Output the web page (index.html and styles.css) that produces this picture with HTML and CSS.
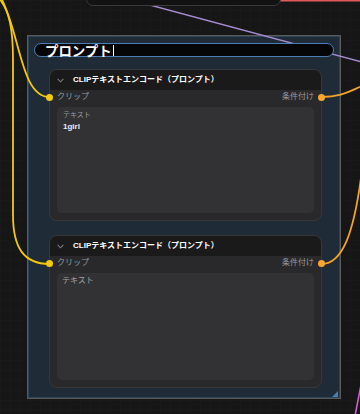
FILE: index.html
```html
<!DOCTYPE html>
<html lang="ja">
<head>
<meta charset="utf-8">
<title>プロンプト</title>
<link rel="stylesheet" href="styles.css">
</head>
<body>
<div class="canvas">
  <div class="topnode"></div>
  <svg class="wires" width="360" height="414" viewBox="0 0 360 414">
    <path class="wire wire-red" d="M280 0.6 L362 0.6"/>
    <path class="wire wire-purple" d="M120 -3 C200 18, 280 40, 362 62"/>
    <path class="wire wire-clip" d="M0 -4 C20 30, 20 97, 49.5 97"/>
    <path class="wire wire-clip" d="M-3 -4 C10 10, 13 30, 13 60 L13 215 C13 248, 24 264, 49.5 264"/>
    <path class="wire wire-cond" d="M321.5 97 C340 97, 348 92, 362 86"/>
    <path class="wire wire-cond" d="M321.5 264 C342 264, 354 235, 362 170"/>
    <path class="wire wire-pink" d="M362 380 C359 395, 357 405, 355 416"/>
  </svg>
  <section class="group">
    <div class="group-title"><span class="group-title-text">プロンプト</span><span class="caret"></span></div>

    <div class="node node-first">
      <header class="node-title">
        <svg class="chevron" width="7" height="5" viewBox="0 0 7 5"><path d="M0.6 0.8 L3.5 3.8 L6.4 0.8"/></svg>
        <span class="node-name">CLIPテキストエンコード（プロンプト）</span>
      </header>
      <div class="node-io">
        <span class="slot"><i class="dot dot-in dot-clip"></i>クリップ</span>
        <span class="slot">条件付け<i class="dot dot-out dot-cond"></i></span>
      </div>
      <div class="textarea ta-first">
        <div class="ta-label">テキスト</div>
        <div class="ta-value">1girl</div>
      </div>
    </div>

    <div class="node node-second">
      <header class="node-title">
        <svg class="chevron" width="7" height="5" viewBox="0 0 7 5"><path d="M0.6 0.8 L3.5 3.8 L6.4 0.8"/></svg>
        <span class="node-name">CLIPテキストエンコード（プロンプト）</span>
      </header>
      <div class="node-io">
        <span class="slot"><i class="dot dot-in dot-clip"></i>クリップ</span>
        <span class="slot">条件付け<i class="dot dot-out dot-cond"></i></span>
      </div>
      <div class="textarea ta-second">
        <div class="ta-placeholder">テキスト</div>
      </div>
    </div>

    <span class="resize"></span>
  </section>
</div>
</body>
</html>
```
FILE: styles.css
```css
* { box-sizing: border-box; }

html, body {
  margin: 0;
  padding: 0;
  background: #161616;
}

body {
  font-family: "Liberation Sans", "Noto Sans CJK JP", sans-serif;
  width: 360px;
  height: 414px;
  overflow: hidden;
}

.canvas {
  position: relative;
  width: 360px;
  height: 414px;
  overflow: hidden;
  background-color: #161616;
  background-image:
    linear-gradient(#191919 1px, transparent 1px),
    linear-gradient(90deg, #191919 1px, transparent 1px);
  background-size: 10px 10px;
}

.topnode {
  position: absolute;
  left: 86px;
  top: -20px;
  width: 195px;
  height: 26px;
  background: #121212;
  border: 1px solid #3a3a3a;
  border-radius: 0 0 7px 7px;
  z-index: 3;
}

.wires {
  position: absolute;
  left: 0;
  top: 0;
  z-index: 1;
  overflow: visible;
}

.wire {
  fill: none;
  stroke-linecap: round;
}
.wire-red { stroke: #e05a5a; stroke-width: 2; }
.wire-purple { stroke: #a58ad2; stroke-width: 1.5; }
.wire-clip { stroke: #f2c80f; stroke-width: 1.8; }
.wire-cond { stroke: #f5a22a; stroke-width: 1.8; }
.wire-pink { stroke: #d25ed6; stroke-width: 1.6; }

.group {
  position: absolute;
  left: 27px;
  top: 35px;
  width: 314px;
  height: 364px;
  border: 1px solid #5a5a5a;
  box-shadow: inset 0 0 0 1px #2c4558;
  background: #1f2c37;
  padding-top: 7px;
  display: flex;
  flex-direction: column;
}

.group-title {
  position: relative;
  z-index: 2;
  height: 14px;
  margin: 0 6px;
  border: 1px solid #4b7db4;
  border-radius: 7px;
  background: #060608;
  padding-left: 10px;
  display: flex;
  align-items: center;
  color: #ffffff;
  font-family: "Noto Sans CJK JP", sans-serif;
  font-weight: 700;
  font-size: 13.4px;
  line-height: 12px;
}

.caret {
  display: inline-block;
  width: 1px;
  height: 11px;
  background: #ffffff;
  margin-left: 1px;
}

.node {
  position: relative;
  z-index: 2;
  margin-left: 21px;
  width: 273px;
  border: 1px solid #37373a;
  border-radius: 8px;
  background: #29292b;
  padding-bottom: 7px;
}

.node-first { margin-top: 12px; }
.node-second { margin-top: 14px; }

.node-title {
  height: 20px;
  background: #1a1a1b;
  border-radius: 7px 7px 0 0;
  display: flex;
  align-items: center;
  padding-left: 7px;
}

.chevron {
  flex: none;
  margin-right: 9px;
}
.chevron path {
  fill: none;
  stroke: #7a7a7c;
  stroke-width: 1.1;
}

.node-name {
  color: #ffffff;
  font-weight: 700;
  font-size: 8px;
  line-height: 10px;
  white-space: nowrap;
}

.node-io {
  position: relative;
  height: 14px;
  padding: 0 7px;
  display: flex;
  justify-content: space-between;
  align-items: center;
  color: #9a9a9c;
  font-size: 8px;
  line-height: 10px;
}

.dot {
  position: absolute;
  top: 3.5px;
  width: 7px;
  height: 7px;
  border-radius: 50%;
}
.dot-in { left: -4px; }
.dot-out { right: -4px; }
.dot-clip { background: #f5c812; }
.dot-cond { background: #f7a530; }

.textarea {
  margin: 3px 7px 0;
  background: #323235;
  border-radius: 5px;
  padding: 4px 6px;
}
.ta-first { height: 106px; }
.ta-second { height: 107px; padding-left: 5px; }

.ta-label {
  color: #9a9a9c;
  font-size: 7px;
  line-height: 8px;
}

.ta-value {
  margin-top: 3px;
  color: #ececec;
  font-weight: 700;
  font-size: 8px;
  line-height: 9px;
}

.ta-placeholder {
  color: #a2a2a4;
  font-size: 8px;
  line-height: 8px;
}

.resize {
  position: absolute;
  right: 2px;
  bottom: 1px;
  width: 0;
  height: 0;
  border-left: 6px solid transparent;
  border-bottom: 6px solid #4a7fae;
}
```
